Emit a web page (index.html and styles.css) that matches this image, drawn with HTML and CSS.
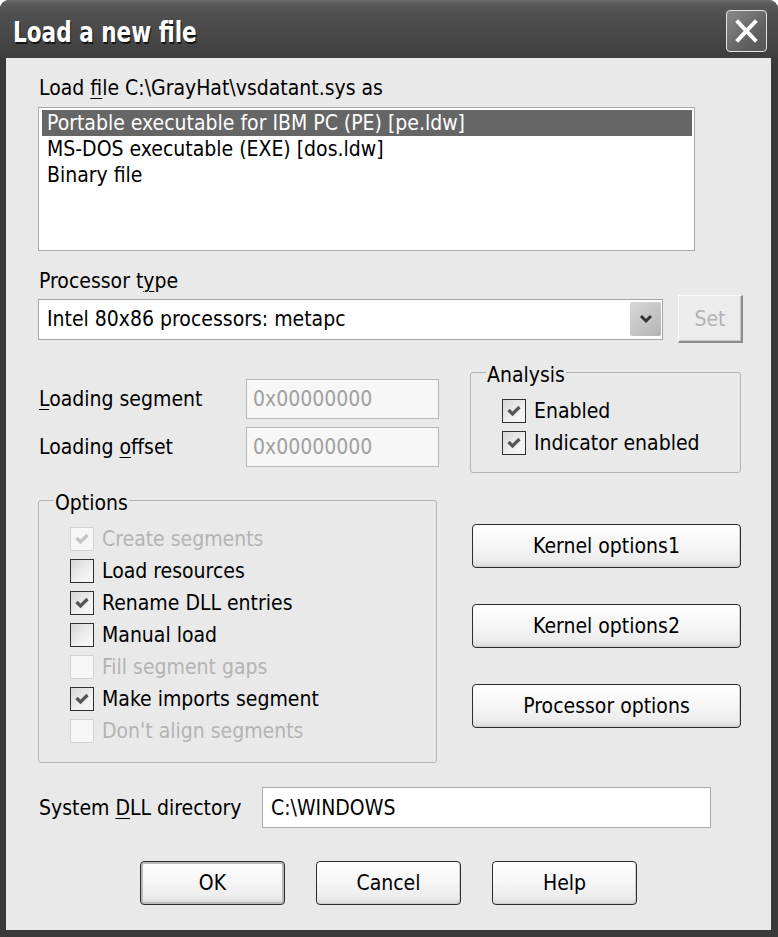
FILE: index.html
```html
<!DOCTYPE html>
<html>
<head>
<meta charset="utf-8">
<title>Load a new file</title>
<link rel="stylesheet" href="styles.css">
</head>
<body>
<div class="window">
  <div class="titlebar">
    <span class="title">Load a new file</span>
    <span class="close">
      <svg width="41" height="42" viewBox="0 0 41 42"><path d="M12 12 L29 30 M29 12 L12 30" stroke="#fff" stroke-width="4" stroke-linecap="square" fill="none"/></svg>
    </span>
  </div>
  <div class="client">
    <div class="lbl lbl-load">Load <u>f</u>ile C:\GrayHat\vsdatant.sys as</div>
    <div class="listbox">
      <div class="item selected">Portable executable for IBM PC (PE) [pe.ldw]</div>
      <div class="item">MS-DOS executable (EXE) [dos.ldw]</div>
      <div class="item">Binary file</div>
    </div>
    <div class="lbl lbl-proc">Processor t<u>y</u>pe</div>
    <div class="combo-row">
      <div class="combo">
        <span class="combo-text">Intel 80x86 processors: metapc</span>
        <span class="drop"><svg width="16" height="12" viewBox="0 0 16 12"><path d="M3 3 L8 8 L13 3" stroke="#333" stroke-width="3" fill="none"/></svg></span>
      </div>
      <div class="btn-set">Set</div>
    </div>
    <div class="mid-row">
      <div class="load-fields">
        <div class="field-row"><span class="field-label"><u>L</u>oading segment</span><div class="input disabled">0x00000000</div></div>
        <div class="field-row"><span class="field-label">Loading <u>o</u>ffset</span><div class="input disabled">0x00000000</div></div>
      </div>
      <fieldset class="group analysis">
        <legend>Analysis</legend>
        <div class="check"><span class="box on"><svg width="22" height="22" viewBox="0 0 22 22"><path d="M5.5 10 L9.5 14 L16.5 7" stroke="#555" stroke-width="3.2" fill="none"/></svg></span>Enabled</div>
        <div class="check"><span class="box on"><svg width="22" height="22" viewBox="0 0 22 22"><path d="M5.5 10 L9.5 14 L16.5 7" stroke="#555" stroke-width="3.2" fill="none"/></svg></span>Indicator enabled</div>
      </fieldset>
    </div>
    <div class="opt-row">
      <fieldset class="group options">
        <legend>Options</legend>
        <div class="check disabled"><span class="box on"><svg width="22" height="22" viewBox="0 0 22 22"><path d="M5.5 10 L9.5 14 L16.5 7" stroke="#c4c4c4" stroke-width="3.2" fill="none"/></svg></span>Create segments</div>
        <div class="check"><span class="box"></span>Load resources</div>
        <div class="check"><span class="box on"><svg width="22" height="22" viewBox="0 0 22 22"><path d="M5.5 10 L9.5 14 L16.5 7" stroke="#555" stroke-width="3.2" fill="none"/></svg></span>Rename DLL entries</div>
        <div class="check"><span class="box"></span>Manual load</div>
        <div class="check disabled"><span class="box"></span>Fill segment gaps</div>
        <div class="check"><span class="box on"><svg width="22" height="22" viewBox="0 0 22 22"><path d="M5.5 10 L9.5 14 L16.5 7" stroke="#555" stroke-width="3.2" fill="none"/></svg></span>Make imports segment</div>
        <div class="check disabled"><span class="box"></span>Don't align segments</div>
      </fieldset>
      <div class="side-buttons">
        <div class="btn wide">Kernel options1</div>
        <div class="btn wide">Kernel options2</div>
        <div class="btn wide">Processor options</div>
      </div>
    </div>
    <div class="dll-row">
      <span class="field-label">System <u>D</u>LL directory</span>
      <div class="input dll">C:\WINDOWS</div>
    </div>
    <div class="bottom-buttons">
      <div class="btn std default">OK</div>
      <div class="btn std">Cancel</div>
      <div class="btn std">Help</div>
    </div>
  </div>
</div>
</body>
</html>
```
FILE: styles.css
```css
* { box-sizing: border-box; }
html, body { margin: 0; padding: 0; }
body {
  width: 778px;
  height: 937px;
  overflow: hidden;
  background: #ffffff;
  font-family: "DejaVu Sans Condensed", "Liberation Sans", sans-serif;
  font-size: 21px;
  color: #000;
}
u { text-decoration-thickness: 1px; text-underline-offset: 3px; }

.window {
  width: 778px;
  height: 937px;
  background: #3a3a3a;
  border-radius: 9px 9px 0 0;
  display: flex;
  flex-direction: column;
}

.titlebar {
  height: 58px;
  flex: none;
  display: flex;
  align-items: flex-start;
  justify-content: space-between;
  padding: 0 11px 0 13px;
  border-radius: 9px 9px 0 0;
  background: linear-gradient(#6e6e6e 0, #595959 4px, #4d4d4d 18px, #464646 40px, #3d3d3d 58px);
}
.title {
  margin-top: 17px;
  color: #fff;
  font-weight: bold;
  font-size: 24px;
  line-height: 32px;
  text-shadow: 1px 1px 0 #151515;
  transform: scaleY(1.18);
  transform-origin: left center;
}
.close {
  margin-top: 10px;
  width: 41px;
  height: 42px;
  border: 1px solid #e4e4e4;
  border-radius: 4px;
  background: linear-gradient(135deg, #8a8a8a, #5e5e5e 70%, #575757);
  display: flex;
}
.close svg { display: block; margin: -1px; }

.client {
  flex: 1;
  margin: 0 7px 7px 6px;
  background: #e9e9e9;
  padding: 17px 0 0 32px;
  display: flex;
  flex-direction: column;
  align-items: flex-start;
}

.lbl { line-height: 26px; padding-left: 1px; white-space: nowrap; }

.listbox {
  margin-top: 6px;
  width: 657px;
  height: 144px;
  border: 1px solid #a9a9a9;
  background: #fff;
  padding: 2px 2px 2px 3px;
}
.item {
  height: 26px;
  line-height: 26px;
  padding-left: 5px;
  white-space: nowrap;
}
.item.selected { background: #666; color: #fff; }

.lbl-proc { margin-top: 17px; }

.combo-row {
  margin-top: 1px;
  display: flex;
  align-items: center;
}
.combo {
  width: 625px;
  height: 41px;
  border: 1px solid #a3a3a3;
  background: #fff;
  display: flex;
  align-items: center;
  padding: 0 1px 0 8px;
}
.combo-text { white-space: nowrap; }
.drop {
  margin-left: auto;
  width: 31px;
  height: 34px;
  border-radius: 2px;
  background: linear-gradient(135deg, #d9d9d9, #c2c2c2 60%, #b4b4b4);
  display: flex;
  align-items: center;
  justify-content: center;
}
.btn-set {
  margin-left: 15px;
  width: 65px;
  height: 48px;
  background: #ececec;
  border-top: 1px solid #fafafa;
  border-left: 1px solid #fafafa;
  border-right: 2px solid #8c8c8c;
  border-bottom: 2px solid #8c8c8c;
  box-shadow: inset -1px -1px 0 #c8c8c8;
  color: #b3b3b3;
  display: flex;
  align-items: center;
  justify-content: center;
}

.mid-row {
  margin-top: 17px;
  display: flex;
  align-items: flex-start;
}
.load-fields {
  padding-top: 19px;
  width: 432px;
  display: flex;
  flex-direction: column;
  gap: 8px;
}
.field-row {
  display: flex;
  align-items: center;
}
.field-label {
  width: 208px;
  padding-left: 1px;
  white-space: nowrap;
}
.input {
  height: 40px;
  border: 1px solid #b7b7b7;
  background: #fff;
  display: flex;
  align-items: center;
  padding-left: 6px;
  white-space: nowrap;
}
.input.disabled {
  width: 193px;
  background: #f7f7f7;
  color: #a0a0a0;
}

.group {
  margin: 0;
  border: 1px solid #b2b2b2;
  border-radius: 3px;
  min-width: 0;
}
.group legend {
  padding: 5px 1px 0 1px;
  margin-left: -16px;
  line-height: 20px;
}

.analysis {
  width: 271px;
  padding: 10px 0 13px 31px;
}

.check {
  height: 32px;
  display: flex;
  align-items: center;
  white-space: nowrap;
}
.box {
  width: 24px;
  height: 24px;
  flex: none;
  margin-right: 8px;
  border: 1px solid #2e2e2e;
  background: linear-gradient(135deg, #d6d6d6, #eeeeee 55%, #fbfbfb);
  display: flex;
  align-items: center;
  justify-content: center;
}
.box svg { display: block; }
.check.disabled { color: #b4b4b4; }
.check.disabled .box {
  border-color: #d2d2d2;
  background: #f6f6f6;
}

.opt-row {
  margin-top: 15px;
  display: flex;
  align-items: flex-start;
}
.options {
  width: 399px;
  height: 275px;
  padding: 10px 0 0 31px;
}

.side-buttons {
  margin-left: 35px;
  padding-top: 36px;
  display: flex;
  flex-direction: column;
  gap: 36px;
}

.btn {
  height: 44px;
  border: 1px solid #2c2c2c;
  border-radius: 4px;
  background: linear-gradient(#ffffff, #f6f6f6 45%, #ececec 85%, #d8d8d8);
  box-shadow: inset -1px -1px 0 #cfcfcf;
  display: flex;
  align-items: center;
  justify-content: center;
  white-space: nowrap;
}
.btn.wide { width: 269px; }

.dll-row {
  margin-top: 24px;
  display: flex;
  align-items: center;
}
.dll-row .field-label { width: 224px; }
.input.dll {
  width: 449px;
  height: 41px;
  border-color: #a9a9a9;
  padding-left: 8px;
}

.bottom-buttons {
  align-self: stretch;
  margin-left: -32px;
  margin-top: 33px;
  display: flex;
  justify-content: center;
  gap: 31px;
}
.btn.std { width: 145px; }
.btn.default {
  box-shadow: inset 0 0 0 2px #b9b9b9, inset -1px -1px 0 #cfcfcf;
}
```
